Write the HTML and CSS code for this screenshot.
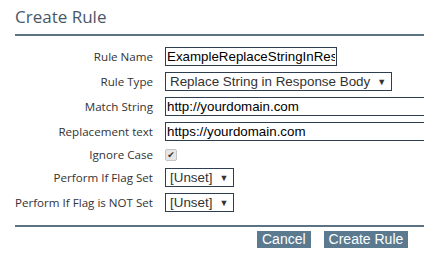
FILE: index.html
```html
<!DOCTYPE html>
<html lang="en">
<head>
    <meta charset="UTF-8">
    <title>Create Rule</title>
    <link rel="stylesheet" href="styles.css">
</head>
<body>
    <div class="dialog">
        <h1 class="dialog-title">Create Rule</h1>

        <form class="rule-form">
            <label class="field-label" for="rule-name">Rule Name</label>
            <div class="field">
                <input class="text-input short" id="rule-name" type="text" value="ExampleReplaceStringInRes">
            </div>

            <label class="field-label" for="rule-type">Rule Type</label>
            <div class="field">
                <div class="select-box" id="rule-type">Replace String in Response Body <span class="arrow">▼</span></div>
            </div>

            <label class="field-label" for="match-string">Match String</label>
            <div class="field">
                <input class="text-input wide" id="match-string" type="text" value="http://yourdomain.com">
            </div>

            <label class="field-label" for="replacement">Replacement text</label>
            <div class="field">
                <input class="text-input wide" id="replacement" type="text" value="https://yourdomain.com">
            </div>

            <label class="field-label" for="ignore-case">Ignore Case</label>
            <div class="field check-field">
                <span class="checkbox" id="ignore-case">✔</span>
            </div>

            <label class="field-label">Perform If Flag Set</label>
            <div class="field">
                <div class="select-box">[Unset] <span class="arrow">▼</span></div>
            </div>

            <label class="field-label">Perform If Flag is NOT Set</label>
            <div class="field">
                <div class="select-box">[Unset] <span class="arrow">▼</span></div>
            </div>
        </form>

        <div class="dialog-footer">
            <button class="btn" type="button">Cancel</button>
            <button class="btn" type="button">Create Rule</button>
        </div>
    </div>
</body>
</html>
```

FILE: styles.css
```css
* {
    box-sizing: border-box;
}

body {
    margin: 0;
    background: white;
    overflow: hidden;
}

.dialog {
    padding: 0 0 0 15px;
    width: 440px;
}

.dialog-title {
    font-family: "Open Sans", sans-serif;
    font-weight: 400;
    font-size: 17px;
    color: #4a5866;
    margin: 0;
    padding: 5px 0 6px;
    border-bottom: 2px solid #5b7283;
}

.rule-form {
    display: grid;
    grid-template-columns: 138px 1fr;
    column-gap: 12px;
    row-gap: 6px;
    align-items: center;
    padding: 11px 0 13px;
    border-bottom: 2px solid #5b7283;
}

.field-label {
    font-family: "Open Sans", sans-serif;
    font-size: 11.6px;
    line-height: 15px;
    color: #333;
    text-align: right;
}

.field {
    display: flex;
    align-items: center;
    height: 19px;
}

.check-field {
    height: 15px;
}

.text-input {
    font-family: "Liberation Sans", Arial, sans-serif;
    font-size: 13.33px;
    color: #000;
    height: 19px;
    padding: 0 1px;
    border: 1.5px solid #2c3e50;
    background: white;
    outline: none;
}

.text-input.short {
    width: 172px;
}

.text-input.wide {
    width: 280px;
}

.select-box {
    font-family: "Liberation Sans", Arial, sans-serif;
    font-size: 13.4px;
    color: #333;
    height: 19px;
    padding: 0 5px 0 4px;
    border: 1.5px solid #2c3e50;
    display: flex;
    align-items: center;
    gap: 7px;
}

.arrow {
    font-size: 9px;
    color: #333;
}

.checkbox {
    width: 12px;
    height: 12px;
    border: 1px solid #c3c3c3;
    border-radius: 2px;
    background: #e6e6e6;
    color: #333;
    font-family: "DejaVu Sans", sans-serif;
    font-size: 9px;
    line-height: 10px;
    text-align: center;
}

.dialog-footer {
    display: flex;
    gap: 13px;
    padding: 4px 0 0 242px;
}

.btn {
    font-family: "Liberation Sans", Arial, sans-serif;
    font-size: 14px;
    color: white;
    background: #5b7a90;
    border: none;
    height: 17px;
    line-height: 17px;
    padding: 0 5px;
    margin: 0;
}
```
